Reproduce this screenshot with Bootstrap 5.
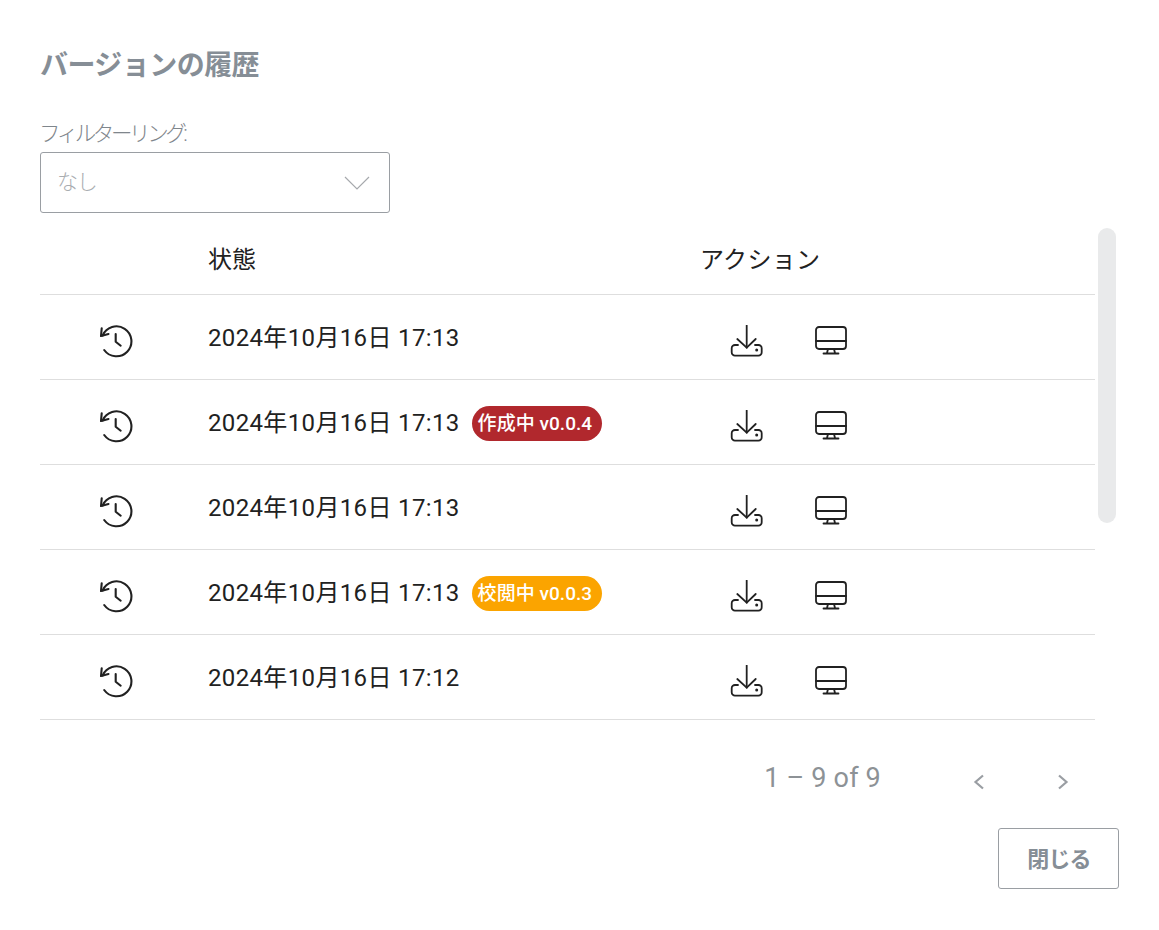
<!DOCTYPE html>
<html lang="ja">
<head>
<meta charset="utf-8">
<title>バージョンの履歴</title>
<link href="https://cdn.jsdelivr.net/npm/bootstrap@5.3.0/dist/css/bootstrap.min.css" rel="stylesheet">
<style>
html,body{height:930px;overflow:hidden;background:#fff}
body{font-family:Roboto,"Noto Sans CJK JP",sans-serif;color:#212121}
.dlg{padding:46px 40px 0 40px;width:1159px;height:930px}
.dlg-title{font-size:28px;font-weight:700;color:#868e96;line-height:40px;margin:0;letter-spacing:-.55px}
.flt-label{font-size:21.5px;font-weight:300;color:#7f868c;line-height:28px;margin:34px 0 0 -1px;letter-spacing:-3.4px;display:block;white-space:nowrap}
.flt-select{width:350px;height:61px;border:1px solid #9a9ea3;border-radius:3px;padding:0 19px 0 16px;margin-top:4px;font-size:21px;font-weight:300;color:#a9adb1;letter-spacing:-1.200px}
.tbl-wrap{margin-top:15px;width:1076px}
.tbl-main{width:1055px}
.ver-table{width:1055px;table-layout:fixed;margin:0;--bs-table-color:#212121;--bs-table-border-color:#dedede}
.ver-table th{height:66px;padding:0 0 1px;font-size:24px;font-weight:400;vertical-align:middle}
.ver-table td{height:85px;padding:2px 0 0;vertical-align:middle;font-size:24px;letter-spacing:.35px}
.col-ic{width:168px}
.col-dt{width:493px}
.ver-table th.hd-act{letter-spacing:.3px}
.hd-act span{margin-left:-1px}
.ico-hist{display:block;margin:6px 0 0 60px}
.act-box{display:flex;gap:50px;padding-left:29px;margin-top:8px}
.pill{display:inline-block;border-radius:18px;height:35px;line-height:35px;margin-left:12px;padding-left:6px;color:#fff;font-size:19px;font-weight:500;vertical-align:1px;width:130px;white-space:nowrap;letter-spacing:.05px;text-align:left}
.pill-red{background:#b1282d}
.pill-amber{background:#fba400}
.sb-thumb{width:18px;height:295px;background:#e9eaeb;border-radius:9px;margin-left:3px}
.pager{width:1055px;height:108px;color:#8d9296;font-size:27px;font-weight:400;padding-top:41px}
.pager-txt{line-height:34px;margin-right:92px;letter-spacing:.2px}
.pager-btns{gap:72px;margin-right:26px;padding-top:13px}
.foot{width:1079px}
.btn-close-dlg{width:121px;height:61px;border:1px solid #9a9ea3;border-radius:3px;background:#fff;color:#868e96;font-size:22px;font-weight:700;padding:3px 0 0 1px;letter-spacing:-.9px}
</style>
</head>
<body>
<svg width="0" height="0" class="d-block" aria-hidden="true">
  <defs>
    <symbol id="i-hist" viewBox="0 0 34 34"><g fill="none" stroke="#212121" stroke-width="2.100" stroke-linecap="round" stroke-linejoin="round"><path d="M2.600 11.500A15 15 0 1 1 4.200 26"/><path d="M1.700 4.300 1 12l7.500-2"/><path d="M15.700 10v7.700l5 4"/></g></symbol>
    <symbol id="i-dl" viewBox="0 0 34 34"><g fill="none" stroke="#212121" stroke-width="1.800" stroke-linecap="round" stroke-linejoin="round"><path d="M16.700.5V22.700"/><path d="M7.300 14l9.400 8.700L25.700 14"/><path d="M8 20H5A3.300 3.300 0 0 0 1.700 23.300v4A3.300 3.300 0 0 0 5 30.700h23.400a3.300 3.300 0 0 0 3.300-3.400v-4A3.300 3.300 0 0 0 28.400 20H25"/></g><circle cx="26.700" cy="25" r="1.500" fill="#212121"/></symbol>
    <symbol id="i-mon" viewBox="0 0 34 34"><g fill="none" stroke="#212121" stroke-width="1.800" stroke-linecap="round" stroke-linejoin="round"><rect x="2" y="2" width="30" height="22" rx="3"/><path d="M2 16h30"/><path d="M14 24l-1 4M20 24l1 4M9.500 28.500h15"/></g></symbol>
  </defs>
</svg>
<div class="dlg">
  <h2 class="dlg-title">バージョンの履歴</h2>
  <label class="flt-label">フィルターリング:</label>
  <div class="flt-select d-flex align-items-center justify-content-between">
    <span>なし</span>
    <svg width="26" height="14" viewBox="0 0 26 14"><path d="M1 1l12 12L25 1" fill="none" stroke="#a6a9ad" stroke-width="1.200"/></svg>
  </div>
  <div class="tbl-wrap d-flex">
    <div class="tbl-main">
      <table class="table ver-table">
        <thead><tr><th class="col-ic"></th><th class="col-dt">状態</th><th class="hd-act"><span>アクション</span></th></tr></thead>
        <tbody>
          <tr><td><svg class="ico-hist" width="34" height="34"><use href="#i-hist"/></svg></td><td>2024年10月16日 17:13</td><td><div class="act-box"><svg width="34" height="34"><use href="#i-dl"/></svg><svg width="34" height="34"><use href="#i-mon"/></svg></div></td></tr>
          <tr><td><svg class="ico-hist" width="34" height="34"><use href="#i-hist"/></svg></td><td>2024年10月16日 17:13<span class="pill pill-red">作成中 v0.0.4</span></td><td><div class="act-box"><svg width="34" height="34"><use href="#i-dl"/></svg><svg width="34" height="34"><use href="#i-mon"/></svg></div></td></tr>
          <tr><td><svg class="ico-hist" width="34" height="34"><use href="#i-hist"/></svg></td><td>2024年10月16日 17:13</td><td><div class="act-box"><svg width="34" height="34"><use href="#i-dl"/></svg><svg width="34" height="34"><use href="#i-mon"/></svg></div></td></tr>
          <tr><td><svg class="ico-hist" width="34" height="34"><use href="#i-hist"/></svg></td><td>2024年10月16日 17:13<span class="pill pill-amber">校閲中 v0.0.3</span></td><td><div class="act-box"><svg width="34" height="34"><use href="#i-dl"/></svg><svg width="34" height="34"><use href="#i-mon"/></svg></div></td></tr>
          <tr><td><svg class="ico-hist" width="34" height="34"><use href="#i-hist"/></svg></td><td>2024年10月16日 17:12</td><td><div class="act-box"><svg width="34" height="34"><use href="#i-dl"/></svg><svg width="34" height="34"><use href="#i-mon"/></svg></div></td></tr>
        </tbody>
      </table>
    </div>
    <div class="sb-thumb"></div>
  </div>
  <div class="pager d-flex justify-content-end">
    <span class="pager-txt">1 – 9 of 9</span>
    <div class="pager-btns d-flex">
      <svg width="12" height="16" viewBox="0 0 12 16"><path d="M10 1.500 2.500 8l7.500 6.500" fill="none" stroke="#9a9ea3" stroke-width="2.200"/></svg>
      <svg width="12" height="16" viewBox="0 0 12 16"><path d="M2 1.500 9.500 8 2 14.500" fill="none" stroke="#9a9ea3" stroke-width="2.200"/></svg>
    </div>
  </div>
  <div class="foot d-flex justify-content-end">
    <button type="button" class="btn btn-close-dlg">閉じる</button>
  </div>
</div>
</body>
</html>
